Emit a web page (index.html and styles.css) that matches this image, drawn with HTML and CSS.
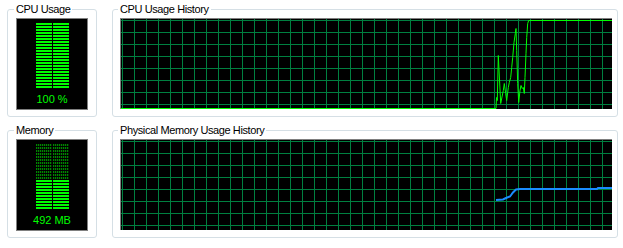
FILE: index.html
```html
<!DOCTYPE html>
<html>
<head>
<meta charset="utf-8">
<link rel="stylesheet" href="styles.css">
</head>
<body>
<div class="page">
  <div class="box meter-box">
    <span class="label">CPU Usage</span>
    <div class="meter">
      <div class="bars">
        <div class="col"><div class="seg on" style="height:66px"></div></div>
        <div class="col"><div class="seg on" style="height:66px"></div></div>
      </div>
      <div class="value">100 %</div>
    </div>
  </div>
  <div class="box graph-box">
    <span class="label">CPU Usage History</span>
    <div class="graph">
      <svg viewBox="0 0 491 90" width="491" height="90">
        <polyline class="cpu-line" points="0,89.5 375,89.5 375.5,78.5 376.3,81.5 377.3,36.5 379.7,84.5 382.3,71.5 383.3,64.5 384.7,74.5 385.7,81.5 387.3,68.5 388.3,63.5 389.7,58.5 390.7,48.5 391.7,38.5 393,23.5 394.3,14.5 395,9.5 395.7,31.5 396.7,64.5 397.7,83.5 399,71.5 400,66.5 401.3,69.5 402.3,68.5 403.3,74.5 404,58.5 405,34.5 405.7,18.5 406.7,4.5 407.7,1.5 491,1.5"/>
      </svg>
    </div>
  </div>
  <div class="box meter-box">
    <span class="label">Memory</span>
    <div class="meter">
      <div class="bars">
        <div class="col"><div class="seg dim" style="height:36px"></div><div class="seg on" style="height:30px"></div></div>
        <div class="col"><div class="seg dim" style="height:36px"></div><div class="seg on" style="height:30px"></div></div>
      </div>
      <div class="value">492 MB</div>
    </div>
  </div>
  <div class="box graph-box">
    <span class="label">Physical Memory Usage History</span>
    <div class="graph">
      <svg viewBox="0 0 491 90" width="491" height="90">
        <polyline class="mem-line" points="375,60 382,59.5 385,58 389,56.5 392,52.5 395,49.5 399,49 476,49 477,48 491,48"/>
      </svg>
    </div>
  </div>
</div>
</body>
</html>
```
FILE: styles.css
```css
body {
  margin: 0;
  background: #fff;
  font-family: "Liberation Sans", Arial, sans-serif;
}
.page {
  display: grid;
  grid-template-columns: 90px 506px;
  grid-template-rows: 108px 108px;
  column-gap: 15px;
  row-gap: 13px;
  padding: 9px 0 0 7px;
}
.box {
  box-sizing: border-box;
  border: 1px solid #d5dfe5;
  border-radius: 3px;
  display: flex;
  flex-direction: column;
  align-items: flex-start;
  padding: 0 8px;
}
.graph-box {
  padding: 0 5px 0 7px;
}
.label {
  font-size: 11px;
  line-height: 12px;
  letter-spacing: -0.4px;
  margin: -7px 0 0 -2px;
  padding: 0 2px;
  background: #fff;
  color: #000;
  white-space: nowrap;
}
.meter {
  margin-top: 3px;
  box-sizing: border-box;
  width: 72px;
  height: 92px;
  background: #000;
  border: 1px solid #808080;
  display: flex;
  flex-direction: column;
  align-items: center;
}
.bars {
  display: flex;
  gap: 1px;
  margin-top: 4px;
  height: 66px;
}
.col {
  width: 16px;
  display: flex;
  flex-direction: column;
}
.seg.on {
  background: repeating-linear-gradient(to bottom, #00ff00 0 2px, #000 2px 3px);
}
.seg.dim {
  background:
    repeating-linear-gradient(to bottom, transparent 0 2px, #000 2px 3px),
    repeating-linear-gradient(90deg, #008400 0 1px, #002400 1px 2px);
}
.value {
  margin-top: 4px;
  font-size: 11px;
  line-height: 12px;
  color: #00ff00;
  white-space: nowrap;
}
.graph {
  margin-top: 3px;
  box-sizing: border-box;
  width: 492px;
  height: 91px;
  background-color: #000;
  background-image:
    linear-gradient(90deg, #008040 1px, transparent 1px),
    linear-gradient(#008040 1px, transparent 1px);
  background-size: 12px 12px;
  background-position: 1px 1px;
  border-top: 1px solid #7f7f7f;
  border-left: 1px solid #7f7f7f;
}
.graph svg {
  display: block;
  width: 491px;
  height: 90px;
}
.cpu-line {
  fill: none;
  stroke: #00ff00;
  stroke-width: 1;
}
.mem-line {
  fill: none;
  stroke: #1a8cff;
  stroke-width: 2;
}
```
